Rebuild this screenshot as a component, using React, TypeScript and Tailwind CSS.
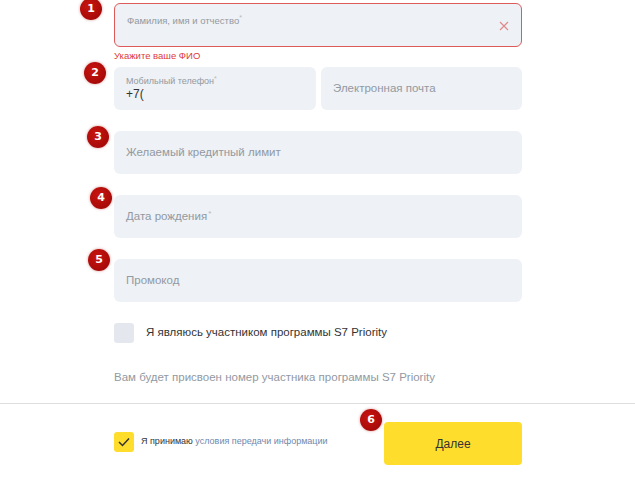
import React from 'react';

const Badge: React.FC<{ n: number; className: string }> = ({ n, className }) => (
  <div
    className={`absolute flex h-[22px] w-[22px] items-center justify-center rounded-full bg-[radial-gradient(circle_at_40%_35%,#c8140f,#9a0606)] font-['DejaVu_Sans',sans-serif] text-[11px] font-bold text-white shadow-[0_0_3px_rgba(150,0,0,0.4)] ${className}`}
  >
    {n}
  </div>
);

const Field: React.FC<{ placeholder: string; star?: boolean; className?: string }> = ({ placeholder, star, className = '' }) => (
  <div className={`flex h-[43px] items-center rounded-[6px] bg-[#eef1f5] px-3 ${className}`}>
    <span className="text-[11.5px] text-[#9299a2]">
      {placeholder}
      {star && <sup className="ml-px text-[8px] text-[#b3b8bf]">*</sup>}
    </span>
  </div>
);

const App: React.FC = () => {
  return (
    <div className="relative h-[482px] w-[635px] overflow-hidden bg-white font-['Liberation_Sans',Arial,sans-serif]">
      <div className="ml-[114px] flex w-[408px] flex-col pt-[3px]">
        {/* ФИО */}
        <div className="flex h-[44px] items-center justify-between rounded-[6px] border border-[#dd5a5a] bg-[#eef1f5] pl-3 pr-[12px]">
          <span className="-mt-[8px] text-[9.5px] text-[#9299a2]">
            Фамилия, имя и отчество<sup className="text-[7px] text-[#b3b8bf]">*</sup>
          </span>
          <svg width="10" height="10" viewBox="0 0 10 10" className="mt-[2px]">
            <path d="M1 1L9 9M9 1L1 9" stroke="#e08b8b" strokeWidth="1.2" />
          </svg>
        </div>
        <div className="mt-[2px] text-[9.5px] leading-[14px] text-[#dd3b3b]">Укажите ваше ФИО</div>

        {/* Телефон / почта */}
        <div className="mt-[4px] flex gap-[5px]">
          <div className="flex h-[43px] w-[202px] flex-col justify-center rounded-[6px] bg-[#eef1f5] px-3">
            <span className="text-[9px] leading-[12px] text-[#9299a2]">
              Мобильный телефон<sup className="text-[7px] text-[#b3b8bf]">*</sup>
            </span>
            <span className="text-[12px] leading-[15px] text-[#333]">+7(</span>
          </div>
          <Field placeholder="Электронная почта" className="flex-1" />
        </div>

        <Field placeholder="Желаемый кредитный лимит" className="mt-[21px]" />
        <Field placeholder="Дата рождения" star className="mt-[21px]" />
        <Field placeholder="Промокод" className="mt-[21px]" />

        <div className="mt-[21px] flex items-center gap-3">
          <div className="h-[20px] w-[20px] rounded-[3px] bg-[#e4e8ee]" />
          <span className="text-[11.5px] text-[#333]">Я являюсь участником программы S7 Priority</span>
        </div>

        <div className="mt-[27px] text-[11.5px] leading-[14px] text-[#9299a2]">Вам будет присвоен номер участника программы S7 Priority</div>
      </div>

      <div className="mt-[19px] h-px w-full bg-[#dddddd]" />

      <div className="ml-[114px] mt-[18px] flex w-[408px] items-center justify-between">
        <div className="mt-[-4px] flex items-center gap-[7px]">
          <div className="flex h-[20px] w-[20px] items-center justify-center rounded-[3px] bg-[#ffdd2d]">
            <svg width="12" height="10" viewBox="0 0 12 10">
              <path d="M1 5l3.5 3.5L11 1.5" fill="none" stroke="#333" strokeWidth="1.5" />
            </svg>
          </div>
          <span className="text-[9px] text-[#333]">
            Я принимаю <span className="text-[#6f88ad]">условия передачи информации</span>
          </span>
        </div>
        <button className="flex h-[43px] w-[138px] items-center justify-center rounded-[4px] bg-[#ffdd2d] text-[12px] text-[#333]">
          Далее
        </button>
      </div>

      <Badge n={1} className="left-[80px] top-[-2px]" />
      <Badge n={2} className="left-[84px] top-[62px]" />
      <Badge n={3} className="left-[87px] top-[126px]" />
      <Badge n={4} className="left-[90px] top-[187px]" />
      <Badge n={5} className="left-[88px] top-[249px]" />
      <Badge n={6} className="left-[360px] top-[409px]" />
    </div>
  );
};

export default App;
